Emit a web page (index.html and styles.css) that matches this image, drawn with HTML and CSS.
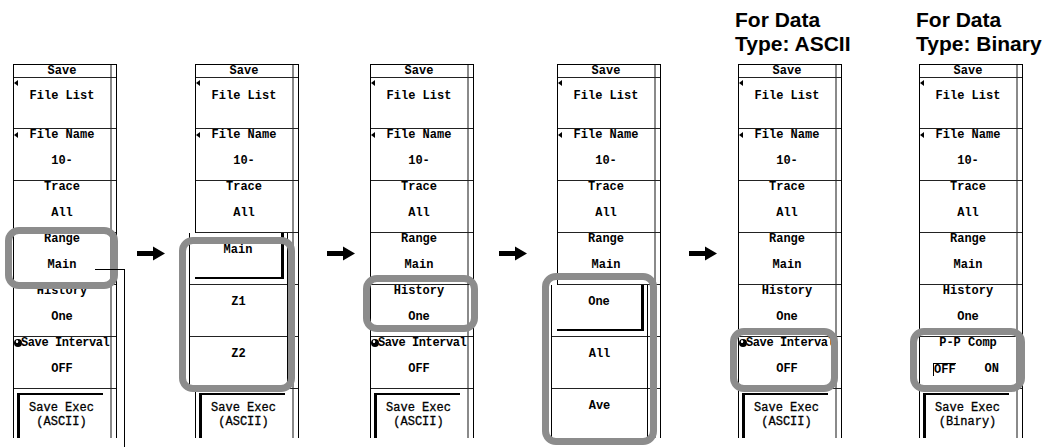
FILE: index.html
```html
<!DOCTYPE html>
<html lang="en">
<head>
  <meta charset="UTF-8" />
  <title>Save menu - steps</title>
  <link rel="stylesheet" href="styles.css">
</head>
<body>
  <div class="stage">

    <!-- step 1: Range -->
    <div class="step s1">
      <div class="heading"></div>
      <div class="panel">
        <div class="row head">Save</div>
        <div class="row list"><i class="tri"></i>File List</div>
        <div class="row"><i class="tri tri-name"></i><div class="label">File Name</div><div class="value">10-</div></div>
        <div class="row"><div class="label">Trace</div><div class="value">All</div></div>
        <div class="row"><div class="label">Range</div><div class="value">Main</div></div>
        <div class="row"><div class="label">History</div><div class="value">One</div></div>
        <div class="row knob-row"><i class="knob"></i><div class="label">Save Interval</div><div class="value">OFF</div></div>
        <div class="row exec"><div class="frame">Save Exec<br>(ASCII)</div></div>
        <div class="hl hl-range"></div>
        <div class="leader"></div>
      </div>
    </div>

    <svg class="arrow a1" viewBox="0 0 28 14"><polygon points="0,4.5 16,4.5 16,0 28,7 16,14 16,9.5 0,9.5"/></svg>

    <!-- step 2: range list -->
    <div class="step s2">
      <div class="heading"></div>
      <div class="panel">
        <div class="row head">Save</div>
        <div class="row list"><i class="tri"></i>File List</div>
        <div class="row"><i class="tri tri-name"></i><div class="label">File Name</div><div class="value">10-</div></div>
        <div class="row"><div class="label">Trace</div><div class="value">All</div></div>
        <div class="row"></div>
        <div class="row"></div>
        <div class="row"></div>
        <div class="row exec"><div class="frame">Save Exec<br>(ASCII)</div></div>
        <div class="popup pop-range">
          <div class="pop-item"><div class="pressed">Main</div></div>
          <div class="pop-item">Z1</div>
          <div class="pop-item last">Z2</div>
        </div>
        <div class="hl hl-range-list"></div>
      </div>
    </div>

    <svg class="arrow a2" viewBox="0 0 28 14"><polygon points="0,4.5 16,4.5 16,0 28,7 16,14 16,9.5 0,9.5"/></svg>

    <!-- step 3: History -->
    <div class="step s3">
      <div class="heading"></div>
      <div class="panel">
        <div class="row head">Save</div>
        <div class="row list"><i class="tri"></i>File List</div>
        <div class="row"><i class="tri tri-name"></i><div class="label">File Name</div><div class="value">10-</div></div>
        <div class="row"><div class="label">Trace</div><div class="value">All</div></div>
        <div class="row"><div class="label">Range</div><div class="value">Main</div></div>
        <div class="row"><div class="label">History</div><div class="value">One</div></div>
        <div class="row knob-row"><i class="knob"></i><div class="label">Save Interval</div><div class="value">OFF</div></div>
        <div class="row exec"><div class="frame">Save Exec<br>(ASCII)</div></div>
        <div class="hl hl-history"></div>
      </div>
    </div>

    <svg class="arrow a3" viewBox="0 0 28 14"><polygon points="0,4.5 16,4.5 16,0 28,7 16,14 16,9.5 0,9.5"/></svg>

    <!-- step 4: history list -->
    <div class="step s4">
      <div class="heading"></div>
      <div class="panel">
        <div class="row head">Save</div>
        <div class="row list"><i class="tri"></i>File List</div>
        <div class="row"><i class="tri tri-name"></i><div class="label">File Name</div><div class="value">10-</div></div>
        <div class="row"><div class="label">Trace</div><div class="value">All</div></div>
        <div class="row"><div class="label">Range</div><div class="value">Main</div></div>
        <div class="row"></div>
        <div class="row"></div>
        <div class="row exec"></div>
        <div class="popup pop-history">
          <div class="pop-item"><div class="pressed">One</div></div>
          <div class="pop-item">All</div>
          <div class="pop-item last">Ave</div>
        </div>
        <div class="hl hl-history-list"></div>
      </div>
    </div>

    <svg class="arrow a4" viewBox="0 0 28 14"><polygon points="0,4.5 16,4.5 16,0 28,7 16,14 16,9.5 0,9.5"/></svg>

    <!-- step 5: ASCII -->
    <div class="step s5">
      <div class="heading">For Data<br>Type: ASCII</div>
      <div class="panel">
        <div class="row head">Save</div>
        <div class="row list"><i class="tri"></i>File List</div>
        <div class="row"><i class="tri tri-name"></i><div class="label">File Name</div><div class="value">10-</div></div>
        <div class="row"><div class="label">Trace</div><div class="value">All</div></div>
        <div class="row"><div class="label">Range</div><div class="value">Main</div></div>
        <div class="row"><div class="label">History</div><div class="value">One</div></div>
        <div class="row knob-row"><i class="knob"></i><div class="label">Save Interval</div><div class="value">OFF</div></div>
        <div class="row exec"><div class="frame">Save Exec<br>(ASCII)</div></div>
        <div class="hl hl-interval"></div>
      </div>
    </div>

    <!-- step 6: Binary -->
    <div class="step s6">
      <div class="heading">For Data<br>Type: Binary</div>
      <div class="panel">
        <div class="row head">Save</div>
        <div class="row list"><i class="tri"></i>File List</div>
        <div class="row"><i class="tri tri-name"></i><div class="label">File Name</div><div class="value">10-</div></div>
        <div class="row"><div class="label">Trace</div><div class="value">All</div></div>
        <div class="row"><div class="label">Range</div><div class="value">Main</div></div>
        <div class="row"><div class="label">History</div><div class="value">One</div></div>
        <div class="row"><div class="label">P-P Comp</div><div class="value toggle"><span class="sel">OFF</span><span>ON</span></div></div>
        <div class="row exec"><div class="frame">Save Exec<br>(Binary)</div></div>
        <div class="hl hl-comp"></div>
      </div>
    </div>

  </div>
</body>
</html>
```

FILE: styles.css
```css
body {
  margin: 0;
  width: 1053px;
  height: 447px;
  overflow: hidden;
  background: #fff;
  color: #000;
}
.stage {
  display: flex;
  align-items: flex-start;
}
.step {
  width: 104px;
  flex-shrink: 0;
}
.s1 { margin-left: 13px; }
.s2 { margin-left: 30px; }
.s3 { margin-left: 15px; }
.s4 { margin-left: 30px; }
.s5 { margin-left: 21px; }
.s6 { margin-left: 77px; }

.arrow {
  width: 28px;
  height: 15px;
  margin-top: 246px;
  flex-shrink: 0;
}
.arrow polygon { fill: #000; }
.a1 { margin-left: 20px; }
.a2 { margin-left: 28px; }
.a3 { margin-left: 25px; }
.a4 { margin-left: 28px; }

.heading {
  height: 64px;
  box-sizing: border-box;
  padding-top: 8px;
  margin-left: -3px;
  font-family: "Liberation Sans", Arial, sans-serif;
  font-weight: bold;
  font-size: 21px;
  line-height: 24px;
  white-space: nowrap;
}

/* soft key menu */
.panel {
  position: relative;
  width: 104px;
  height: 374px;
  box-sizing: border-box;
  border: 1px solid #000;
  border-bottom: none;
  background: linear-gradient(to right, transparent 96px, #8a8a8a 96px, #8a8a8a 98px, transparent 98px);
  font-family: "Liberation Mono", "DejaVu Sans Mono", monospace;
  font-weight: bold;
  font-size: 12px;
  line-height: 13px;
}
.row {
  position: relative;
  height: 52px;
  box-sizing: border-box;
  border-bottom: 1px solid #222;
  padding-right: 6px;
  text-align: center;
  white-space: nowrap;
}
.row.head {
  height: 13px;
  line-height: 12px;
}
.row.list {
  height: 51px;
  padding-top: 12px;
}
.value {
  margin-top: 13px;
}
.tri {
  position: absolute;
  left: 0;
  top: 2px;
  width: 0;
  height: 0;
  border-top: 3.5px solid transparent;
  border-bottom: 3.5px solid transparent;
  border-right: 4px solid #000;
}
.tri-name { top: 3px; }

.knob-row .label {
  text-align: left;
  padding-left: 7px;
  letter-spacing: -0.4px;
}
.knob {
  position: absolute;
  left: 0;
  top: 2px;
  width: 8px;
  height: 8px;
  border-radius: 50%;
  background: radial-gradient(circle at 38% 32%, #fff 0 1px, #000 1.6px);
}

.toggle {
  display: flex;
  justify-content: space-between;
  padding: 0 17px 0 13px;
}
.sel {
  border-top: 1px solid #000;
  border-left: 1px solid #000;
  line-height: 11px;
  padding-top: 1px;
}

.row.exec {
  height: 49px;
  border-bottom: none;
  padding: 4px 13px 0 3px;
}
.frame {
  height: 45px;
  box-sizing: border-box;
  border-top: 2px solid #000;
  border-left: 3px solid #000;
  padding-top: 6px;
  line-height: 14px;
  font-weight: normal;
  -webkit-text-stroke: 0.3px #000;
}

/* popup selection lists */
.popup {
  position: absolute;
  left: -7px;
  width: 99px;
  box-sizing: border-box;
  background: #fff;
  border-left: 1px solid #000;
  border-right: 1px solid #000;
  text-align: center;
}
.pop-range { top: 168px; }
.pop-history { top: 220px; width: 97px; }
.pop-item {
  height: 52px;
  box-sizing: border-box;
  border-bottom: 1px solid #222;
  padding-top: 11px;
}
.pop-item.last { border-bottom: none; }
.pop-item:first-child { padding-top: 0; }
.pressed {
  height: 46px;
  box-sizing: border-box;
  margin: 0 3px 0 5px;
  padding-top: 11px;
  border-right: 3px solid #000;
  border-bottom: 2px solid #000;
}

/* highlight frames */
.hl {
  position: absolute;
  box-sizing: border-box;
  border: 7px solid #8c8c8c;
  border-radius: 14px;
}
.hl-range { left: -9px; top: 162px; width: 113px; height: 62px; }
.hl-range-list { left: -17px; top: 172px; width: 116px; height: 155px; }
.hl-history { left: -8px; top: 210px; width: 115px; height: 57px; }
.hl-history-list { left: -16px; top: 208px; width: 115px; height: 172px; }
.hl-interval { left: -9px; top: 263px; width: 108px; height: 64px; }
.hl-comp { left: -10px; top: 263px; width: 115px; height: 64px; }

.leader {
  position: absolute;
  left: 81px;
  top: 204px;
  width: 29px;
  height: 190px;
  border-top: 1px solid #000;
  border-right: 1px solid #000;
}
```
